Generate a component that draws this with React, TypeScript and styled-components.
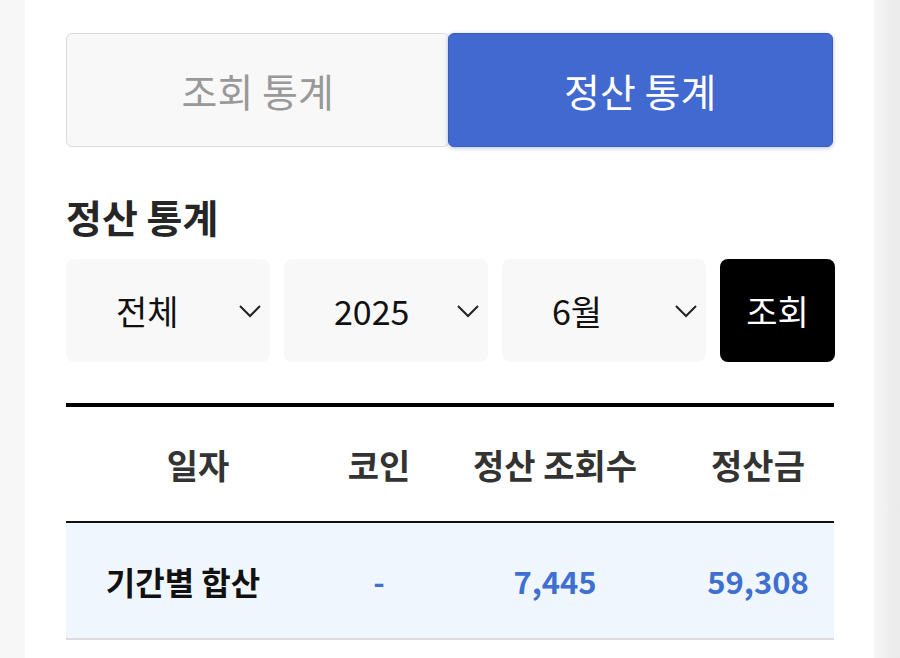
import React from "react";
import styled, { createGlobalStyle } from "styled-components";

const GlobalStyle = createGlobalStyle`
  html, body {
    margin: 0;
    padding: 0;
    height: 100%;
  }
  body {
    background: linear-gradient(to right, #f7f7f7 0, #f7f7f7 874px, #f3f3f3 878px, #eaeaea 900px);
    font-family: "Noto Sans CJK KR", "Noto Sans", sans-serif;
    overflow: hidden;
  }
  * { box-sizing: border-box; }
`;

const Page = styled.div`
  display: flex;
  padding-left: 25px;
  width: 900px;
  height: 658px;
`;

const Card = styled.main`
  width: 849px;
  min-height: 100%;
  background: #ffffff;
  padding: 33px 40px 0 41px;
  display: flex;
  flex-direction: column;
`;

const Tabs = styled.div`
  display: grid;
  grid-template-columns: 1fr 1fr;
  height: 114px;
  width: 767px;
`;

const Tab = styled.button<{ $active?: boolean }>`
  border: 1px solid ${(p) => (p.$active ? "#3a5cbc" : "#dcdcdc")};
  background: ${(p) => (p.$active ? "#4269d0" : "#f8f8f8")};
  color: ${(p) => (p.$active ? "#ffffff" : "#999999")};
  border-radius: 6px;
  font-family: inherit;
  font-size: 39px;
  font-weight: 400;
  box-shadow: ${(p) => (p.$active ? "0 1px 4px rgba(40,70,160,0.35)" : "none")};
  padding: 0;
  margin-left: ${(p) => (p.$active ? "-2px" : "0")};
  position: relative;
`;

const Heading = styled.h2`
  margin: 47px 0 0 0;
  font-size: 39px;
  line-height: 45px;
  font-weight: 700;
  color: #262626;
`;

const Filters = styled.div`
  display: grid;
  grid-template-columns: 204px 204px 204px 115px;
  column-gap: 14px;
  margin-top: 20px;
  height: 103px;
`;

const Select = styled.div`
  display: flex;
  align-items: center;
  justify-content: space-between;
  background: #f8f8f8;
  border-radius: 8px;
  padding: 0 8px 0 50px;
  font-size: 34px;
  color: #111111;
`;

const Chevron = styled.svg`
  width: 24px;
  height: 14px;
  flex: none;
`;

const SearchButton = styled.button`
  background: #000000;
  color: #ffffff;
  border: none;
  border-radius: 8px;
  font-family: inherit;
  font-size: 34px;
  padding: 0;
`;

const Table = styled.div`
  margin-top: 41px;
  width: 768px;
  border-top: 4px solid #000000;
`;

const Row = styled.div<{ $body?: boolean }>`
  display: grid;
  grid-template-columns: 264px 98px 254px 152px;
  align-items: center;
  height: ${(p) => (p.$body ? "117px" : "116px")};
  background: ${(p) => (p.$body ? "#f0f6fd" : "#ffffff")};
  border-bottom: 2px solid ${(p) => (p.$body ? "#dcdcdc" : "#111111")};
`;

const HeadCell = styled.div`
  text-align: center;
  font-size: 34px;
  font-weight: 700;
  color: #333333;
  white-space: nowrap;
`;

const Cell = styled.div<{ $blue?: boolean; $shift?: number }>`
  text-align: center;
  font-size: ${(p) => (p.$blue ? "31px" : "32px")};
  font-weight: 700;
  color: ${(p) => (p.$blue ? "#3f70d1" : "#111111")};
  padding-right: ${(p) => (p.$shift ? `${p.$shift}px` : "0")};
  white-space: nowrap;
`;

const ChevronIcon = () => (
  <Chevron viewBox="0 0 24 14" fill="none">
    <polyline points="2,2 12,12 22,2" stroke="#222" strokeWidth="2" strokeLinejoin="miter" />
  </Chevron>
);

export default function App() {
  return (
    <>
      <GlobalStyle />
      <Page>
        <Card>
          <Tabs>
            <Tab>조회 통계</Tab>
            <Tab $active>정산 통계</Tab>
          </Tabs>
          <Heading>정산 통계</Heading>
          <Filters>
            <Select>
              <span>전체</span>
              <ChevronIcon />
            </Select>
            <Select>
              <span>2025</span>
              <ChevronIcon />
            </Select>
            <Select>
              <span>6월</span>
              <ChevronIcon />
            </Select>
            <SearchButton>조회</SearchButton>
          </Filters>
          <Table>
            <Row>
              <HeadCell>일자</HeadCell>
              <HeadCell>코인</HeadCell>
              <HeadCell>정산 조회수</HeadCell>
              <HeadCell>정산금</HeadCell>
            </Row>
            <Row $body>
              <Cell $shift={30}>기간별 합산</Cell>
              <Cell $blue>-</Cell>
              <Cell $blue>7,445</Cell>
              <Cell $blue>59,308</Cell>
            </Row>
          </Table>
        </Card>
      </Page>
    </>
  );
}
